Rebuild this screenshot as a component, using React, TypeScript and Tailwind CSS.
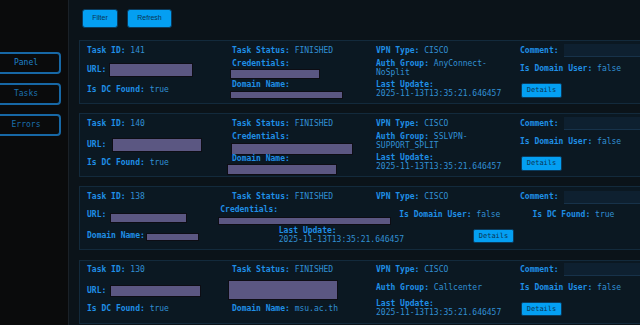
import React from "react";

const LBL = "font-bold text-[#1f8fe6]";
const VAL = "text-[#3190d4]";

function F({ l, v, className = "" }: { l: string; v?: string; className?: string }) {
  return (
    <div className={"h-[10px] leading-[10px] whitespace-nowrap shrink-0 " + className}>
      <span className={LBL}>{l}</span>
      {v !== undefined && <span className={VAL}> {v}</span>}
    </div>
  );
}

function Two({ l, v, className = "" }: { l: string; v: React.ReactNode; className?: string }) {
  return (
    <div className={"leading-[9px] whitespace-nowrap shrink-0 " + className}>
      <span className={LBL}>{l}</span>
      {v}
    </div>
  );
}

function R({ className = "" }: { className?: string }) {
  return <div className={"shrink-0 bg-[#5b5782] border border-[#0d0d14] " + className} />;
}

function Comment({ className = "" }: { className?: string }) {
  return (
    <div className={"flex items-center h-[13px] shrink-0 " + className}>
      <span className={LBL + " leading-[10px]"}>Comment:</span>
      <div className="ml-[5px] w-[120px] h-[13px] shrink-0 bg-[#0e2030] border-b border-[#17324a]" />
    </div>
  );
}

function Details({ className = "" }: { className?: string }) {
  return (
    <button
      className={
        "w-[41px] shrink-0 flex items-center justify-center bg-[#049ff2] border border-[#0a3a5c] rounded-[2px] text-[7px] text-[#0a3554] leading-none " +
        className
      }
    >
      Details
    </button>
  );
}

function Card({ children, className = "" }: { children: React.ReactNode; className?: string }) {
  return (
    <div
      className={
        "w-[640px] h-[64px] shrink-0 border border-[#132a3c] bg-[#0b1822] pl-[7px] text-[8px] " + className
      }
    >
      {children}
    </div>
  );
}

const C1 = "w-[145px] shrink-0 flex flex-col";
const C2 = "w-[144px] shrink-0 flex flex-col";

export default function App() {
  return (
    <div
      className="w-[640px] h-[325px] overflow-hidden flex bg-[#0b1319]"
      style={{ fontFamily: "'DejaVu Sans Mono', monospace" }}
    >
      <aside className="w-[69px] shrink-0 bg-[#0a0b0c] border-r border-[#1a2128] flex flex-col pt-[52px] gap-[9px]">
        {["Panel", "Tasks", "Errors"].map((t, i) => (
          <div
            key={t}
            className={
              "ml-[-9px] w-[70px] h-[22px] border-2 border-[#1768a6] rounded-[4px] flex items-center justify-center text-[8px] " +
              (i === 0 ? "text-[#1f82cc]" : "text-[#1b70ad]")
            }
          >
            {t}
          </div>
        ))}
      </aside>
      <main className="flex-1 min-w-0 pl-[10px] pt-[9px] overflow-hidden">
        <div className="flex gap-[9px] ml-[3px]" style={{ fontFamily: "'Liberation Sans', Arial, sans-serif" }}>
          <button className="w-[36px] h-[19px] bg-[#049ff2] border border-[#0a3a5c] rounded-[3px] text-[7px] text-[#0a3554]">
            Filter
          </button>
          <button className="w-[45px] h-[19px] bg-[#049ff2] border border-[#0a3a5c] rounded-[3px] text-[7px] text-[#0a3554]">
            Refresh
          </button>
        </div>

        <div className="mt-[12px] flex flex-col gap-[9px]">
          {/* Card 1 */}
          <Card className="flex">
            <div className={C1}>
              <F className="mt-[5px]" l="Task ID:" v="141" />
              <div className="mt-[7px] h-[14px] flex items-center">
                <span className={LBL}>URL:</span>
                <R className="ml-[3px] w-[84px] h-[14px]" />
              </div>
              <F className="mt-[8px]" l="Is DC Found:" v="true" />
            </div>
            <div className={C2}>
              <F className="mt-[5px]" l="Task Status:" v="FINISHED" />
              <F className="mt-[3px]" l="Credentials:" />
              <R className="ml-[-2px] w-[90px] h-[10px]" />
              <F className="mt-[1px]" l="Domain Name:" />
              <R className="mt-[1px] ml-[-2px] w-[113px] h-[8px]" />
            </div>
            <div className={C2}>
              <F className="mt-[5px]" l="VPN Type:" v="CISCO" />
              <Two
                className="mt-[3px]"
                l="Auth Group:"
                v={
                  <span className={VAL}>
                    {" "}AnyConnect-
                    <br />
                    NoSplit
                  </span>
                }
              />
              <Two
                className="mt-[3px]"
                l="Last Update:"
                v={
                  <>
                    <br />
                    <span className={VAL}>2025-11-13T13:35:21.646457</span>
                  </>
                }
              />
            </div>
            <div className="flex-1 flex flex-col">
              <Comment className="mt-[3px]" />
              <F className="mt-[7px]" l="Is Domain User:" v="false" />
              <Details className="mt-[9px] ml-[1px] h-[15px]" />
            </div>
          </Card>

          {/* Card 2 */}
          <Card className="flex">
            <div className={C1}>
              <F className="mt-[5px]" l="Task ID:" v="140" />
              <div className="mt-[9px] h-[14px] flex items-center">
                <span className={LBL}>URL:</span>
                <R className="ml-[6px] w-[90px] h-[14px]" />
              </div>
              <F className="mt-[6px]" l="Is DC Found:" v="true" />
            </div>
            <div className={C2}>
              <F className="mt-[5px]" l="Task Status:" v="FINISHED" />
              <F className="mt-[3px]" l="Credentials:" />
              <R className="mt-[1px] ml-[-1px] w-[122px] h-[12px]" />
              <F className="mt-[-1px]" l="Domain Name:" />
              <R className="ml-[-5px] w-[110px] h-[11px]" />
            </div>
            <div className={C2}>
              <F className="mt-[5px]" l="VPN Type:" v="CISCO" />
              <Two
                className="mt-[3px]"
                l="Auth Group:"
                v={
                  <span className={VAL}>
                    {" "}SSLVPN-
                    <br />
                    SUPPORT_SPLIT
                  </span>
                }
              />
              <Two
                className="mt-[3px]"
                l="Last Update:"
                v={
                  <>
                    <br />
                    <span className={VAL}>2025-11-13T13:35:21.646457</span>
                  </>
                }
              />
            </div>
            <div className="flex-1 flex flex-col">
              <Comment className="mt-[3px]" />
              <F className="mt-[7px]" l="Is Domain User:" v="false" />
              <Details className="mt-[9px] ml-[1px] h-[15px]" />
            </div>
          </Card>

          {/* Card 3 */}
          <Card className="flex flex-col">
            <div className="mt-[5px] h-[10px] flex items-center">
              <F className="w-[145px]" l="Task ID:" v="138" />
              <F className="w-[144px]" l="Task Status:" v="FINISHED" />
              <F className="w-[144px]" l="VPN Type:" v="CISCO" />
              <Comment />
            </div>
            <div className="mt-[3px] h-[20px] flex items-start">
              <span className={LBL + " mt-[5px] leading-[10px] shrink-0"}>URL:</span>
              <R className="mt-[8px] ml-[4px] w-[77px] h-[10px]" />
              <div className="ml-[31px] shrink-0 flex flex-col">
                <F className="ml-[2px]" l="Credentials:" />
                <R className="mt-[2px] w-[173px] h-[8px]" />
              </div>
              <F className="mt-[5px] ml-[8px]" l="Is Domain User:" v="false" />
              <F className="mt-[5px] ml-[32px]" l="Is DC Found:" v="true" />
            </div>
            <div className="mt-[1px] h-[18px] flex items-start">
              <span className={LBL + " mt-[5px] leading-[10px] shrink-0"}>Domain Name:</span>
              <R className="mt-[7px] ml-[1px] w-[53px] h-[8px]" />
              <Two
                className="ml-[80px]"
                l="Last Update:"
                v={
                  <>
                    <br />
                    <span className={VAL}>2025-11-13T13:35:21.646457</span>
                  </>
                }
              />
              <Details className="mt-[3px] ml-[69px] h-[14px]" />
            </div>
          </Card>

          {/* Card 4 */}
          <Card className="flex mt-[1px]">
            <div className={C1}>
              <F className="mt-[4px]" l="Task ID:" v="130" />
              <div className="mt-[10px] h-[12px] flex items-center">
                <span className={LBL}>URL:</span>
                <R className="ml-[4px] w-[91px] h-[12px]" />
              </div>
              <F className="mt-[7px]" l="Is DC Found:" v="true" />
            </div>
            <div className={C2}>
              <F className="mt-[4px]" l="Task Status:" v="FINISHED" />
              <R className="mt-[5px] ml-[-4px] w-[110px] h-[20px]" />
              <F className="mt-[4px]" l="Domain Name:" v="msu.ac.th" />
            </div>
            <div className={C2}>
              <F className="mt-[4px]" l="VPN Type:" v="CISCO" />
              <F className="mt-[8px]" l="Auth Group:" v="Callcenter" />
              <Two
                className="mt-[6px]"
                l="Last Update:"
                v={
                  <>
                    <br />
                    <span className={VAL}>2025-11-13T13:35:21.646457</span>
                  </>
                }
              />
            </div>
            <div className="flex-1 flex flex-col">
              <Comment className="mt-[2px]" />
              <F className="mt-[7px]" l="Is Domain User:" v="false" />
              <Details className="mt-[9px] ml-[1px] h-[14px]" />
            </div>
          </Card>
        </div>
      </main>
    </div>
  );
}
